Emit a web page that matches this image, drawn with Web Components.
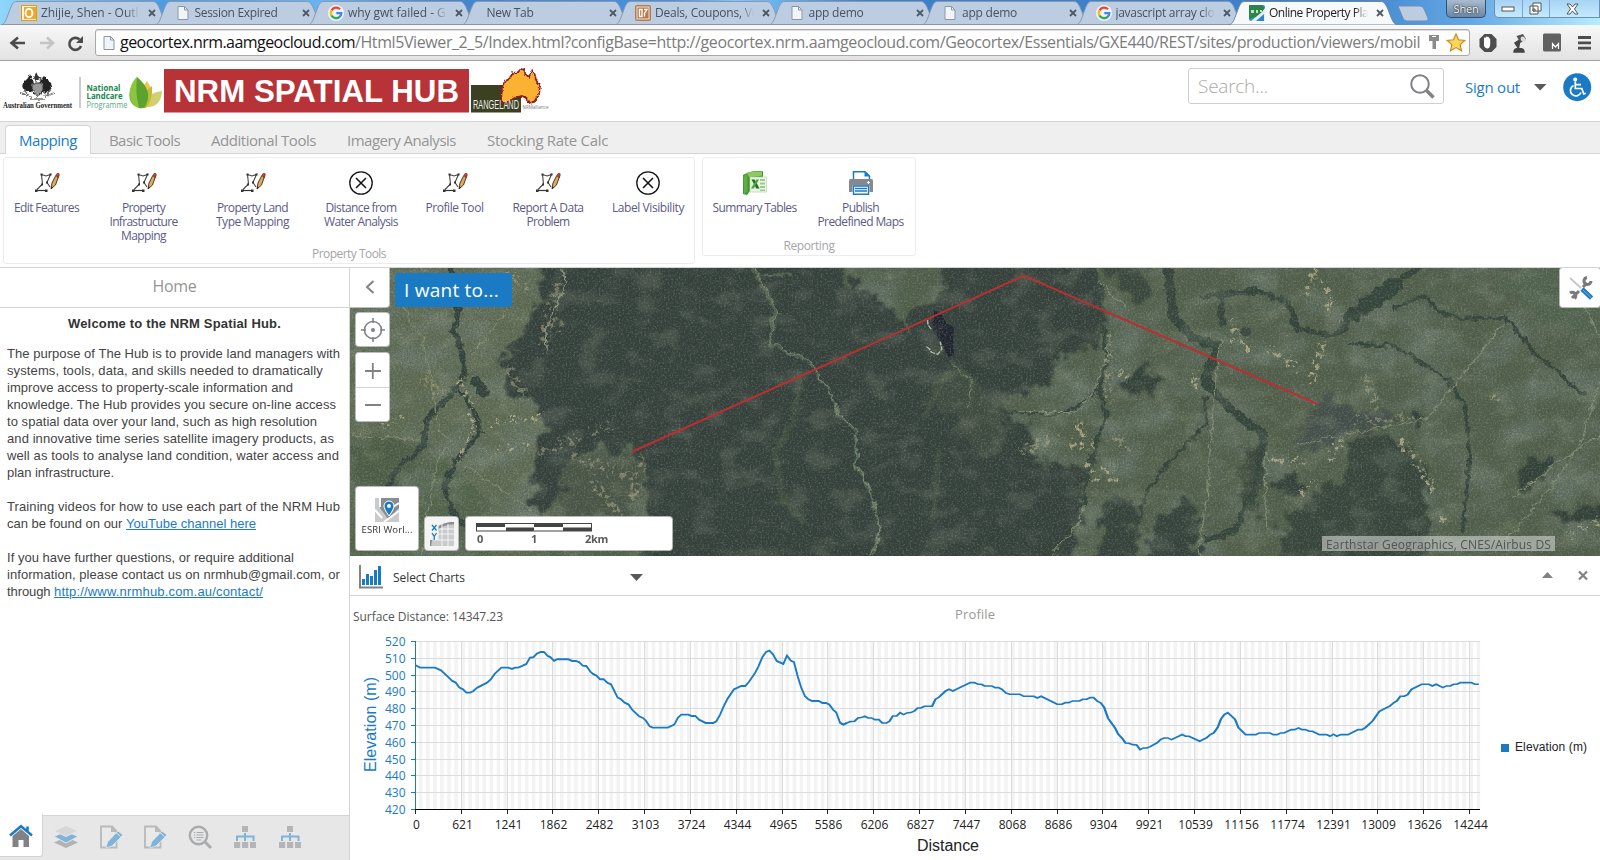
<!DOCTYPE html>
<html lang="en">
<head>
<meta charset="utf-8">
<title>Online Property Planning</title>
<style>
html,body{margin:0;height:100%;background:#fff}
body{font-family:"Open Sans","Noto Sans",sans-serif;font-size:12px;color:#444;overflow:hidden}
</style>
</head>
<body>
<spatial-app></spatial-app>
<script>
const define = (name, markup, hook) => customElements.define(name, class extends HTMLElement {
  connectedCallback() {
    if (this.shadowRoot) return;
    const t = document.createElement('template');
    t.innerHTML = typeof markup === 'function' ? markup(this) : markup;
    this.attachShadow({mode: 'open'}).append(t.content.cloneNode(true));
    if (hook) hook(this);
  }
});

/* One line of text, tracked so that it takes the width given in "w". */
define('fit-text', `<style>:host{display:inline-block;white-space:pre;flex:none;text-decoration:inherit}</style><slot></slot>`, el => {
  requestAnimationFrame(() => fit(el));
  fit(el);
});
function fit(el) {
  const w = +el.getAttribute('w');
  if (!w) return;
  el.style.letterSpacing = '0';
  const n = el.textContent.length;
  const now = el.getBoundingClientRect().width;
  if (now) el.style.letterSpacing = ((w - now) / n).toFixed(3) + 'px';
}

/* ---------- icons ---------- */
const ICONS = {
  outlook: `<svg width="16" height="16"><rect x=".5" y=".5" width="15" height="15" fill="#fff3cf" stroke="#e79a15"/><rect x="3" y="2" width="12" height="12" fill="#eda72a"/><ellipse cx="8" cy="8" rx="3.4" ry="4.2" fill="none" stroke="#fff" stroke-width="2"/></svg>`,
  page: `<svg width="16" height="16"><path d="M3 1.5h6.500l3.500 3.500v9.500h-10z" fill="#f1f4f8" stroke="#8b97a5"/><path d="M9.500 1.500v3.500h3.500" fill="none" stroke="#8b97a5"/></svg>`,
  google: `<svg width="16" height="16"><circle cx="8" cy="8" r="8" fill="#fff" opacity=".75"/><g fill="none" stroke-width="2.300"><path d="M12 4.200A5.300 5.300 0 0 0 3.500 5.500" stroke="#ea4335"/><path d="M3.500 5.400A5.300 5.300 0 0 0 3.500 10.700" stroke="#fbbc05"/><path d="M3.500 10.500A5.300 5.300 0 0 0 11.500 12" stroke="#34a853"/><path d="M11.300 12.200A5.300 5.300 0 0 0 13.300 8.200H8.300" stroke="#4285f4"/></g></svg>`,
  oz: `<svg width="16" height="16"><rect width="16" height="16" rx="2" fill="#b8794e"/><rect x="2" y="2" width="12" height="12" fill="none" stroke="#f0e5dc"/><path d="M4.500 4.500h2.500v7h-2.500zM9 4.500h3l-2.500 4v3" fill="none" stroke="#fff" stroke-width="1.300"/></svg>`,
  geo: `<svg width="16" height="16"><rect width="16" height="16" rx="2" fill="#3f8fc4"/><path d="M0 0h13l3 4-6 7-10 3z" fill="#2b8449"/><path d="M2 16 13 7l3-4v13z" fill="#e5edf0"/><path d="M7 16 15 9v7z" fill="#2f88c9"/><path d="M2 5h3v3H2zM7 5h2v3H7zM11 5h2v2h-2z" fill="#bfe0c6"/></svg>`,
  edit: `<svg width="24" height="24" fill="none"><path d="M6.500 3.500 11 5 15.500 3.500 13.500 8l-1.500 3.500 3 4.500M6.500 3.500 7.500 13 2 18.500" stroke="#444" stroke-width="1.100"/><path d="M1 19.500h10" stroke="#333" stroke-width="1.200"/><g fill="#333"><path d="M5.500 2.500h2v2h-2zM0 18.500h2.500v2.500H0zM10 18.500h2.500v2.500h-2.500zM11 10.500h2v2h-2zM6 12.500h2v2H6zM14.500 2.500h2v2h-2z"/></g><path d="M16 18 17 12 20.800 4.500 23.500 5.500 20.500 14z" fill="#dfac5d" stroke="#4a3a25"/><path d="M21 4.500l1-2h2l.3 1.500L23.200 7z" fill="#d33a28" stroke="#6a2a20" stroke-width=".6"/><path d="M16 18l.5-2.500 1.500 1z" fill="#222"/></svg>`,
  cross: `<svg width="24" height="24" fill="none" stroke="#111" stroke-width="1.300"><circle cx="12" cy="12" r="11.200"/><path d="M7 7l10 10M17 7 7 17" stroke-width="1.500"/></svg>`,
  excel: `<svg width="24" height="24"><path d="M5 1.500Q12-.5 20 .3V7H7v13L4 24 0 23V4z" fill="#3f9434"/><path d="M4 2Q11 0 19 .8v4L6 6z" fill="#8ccb62"/><path d="M.500 5l4-2.500V21L1 23z" fill="#62ad43"/><rect x="7" y="6" width="16.500" height="15" fill="#eef5ea" stroke="#b4d6a6" stroke-width=".7"/><path d="M19.500 8v12" stroke="#9ccb86" stroke-width="5" stroke-dasharray="2 1.500"/><rect x="7.500" y="7.500" width="9" height="11" fill="#dff0d7"/><path d="M8.500 8.500h3.200l4.800 9h-3.200z" fill="#1f6f24"/><path d="M16 8.500h-2.500L8 17.500h2.700z" fill="#4da03f"/></svg>`,
  print: `<svg width="24" height="24"><path d="M4.500 8V.7H16L20.500 5v3" fill="#fff" stroke="#1a7bc4" stroke-width="1.500"/><path d="M15.500 0v5.500h5.500z" fill="#1a7bc4"/><path d="M1.500 8h21q1.500 0 1.500 1.500V21H0V9.500Q0 8 1.500 8z" fill="#86888c"/><path d="M3.500 14.500h17v9.500h-17z" fill="#fff"/><path d="M4.500 15h15v8.200h-15z" fill="#fff" stroke="#1a7bc4" stroke-width="1.400"/><path d="M6 17.500h12M6 20h12" stroke="#1a7bc4" stroke-width="1.300"/><path d="M18 11.500h3M19.500 10v3" stroke="#fff"/></svg>`,
  home: `<svg width="24" height="24"><path d="M3.500 12 12 5l8 7v11h-5.500v-7h-5v7h-6z" fill="#808285"/><path d="M1 11.500 12 2.300 23 11.500M18.500 2.500v6" fill="none" stroke="#1a7bc4" stroke-width="2.600"/></svg>`,
  layers: `<svg width="24" height="24"><path d="M0 17.500 12 12l12 5.500L12 23z" fill="#b2b3b5"/><path d="M0 11.500 12 6l12 5.500L12 18z" fill="#7fb3d9" stroke="#e7e7e7"/><path d="M0 6 12 .5 24 6 12 11.500z" fill="#d5d7d8" stroke="#e7e7e7"/></svg>`,
  note: `<svg width="24" height="24"><path d="M2 1.500h11l4.500 4.500v16.500H2z" fill="#e9e9e9" stroke="#b8b9ba" stroke-width="1.800"/><path d="M12 1v6h6z" fill="#b8b9ba"/><path d="M7 23l1.500-6L19 6l5 4L13 21z" fill="#7fb3d9" stroke="#e7e7e7" stroke-width=".8"/><path d="M17 7.500l4.500 4" stroke="#e7e7e7"/></svg>`,
  find: `<svg width="24" height="24" fill="none"><circle cx="10.500" cy="10.500" r="8.700" stroke="#a9abad" stroke-width="2.400"/><path d="M17 17l6 6" stroke="#a9abad" stroke-width="3"/><path d="M8.500 7.500h7M8.500 10h7M8.500 12.500h7M8.500 15h5M5.800 7.500h1.500M5.800 10h1.500M5.800 12.500h1.500" stroke="#a9abad" stroke-width="1.200"/></svg>`,
  tree: `<svg width="24" height="24"><path d="M9 1h6v6H9zM1 17h6.200v6H1zM9 17h6.200v6H9zM17 17h6v6h-6z" fill="#b4b5b6"/><path d="M12 8v8M4 16v-4.500h16.500V16" fill="none" stroke="#7fb3d9" stroke-width="2"/></svg>`
};
define('ui-icon', el => `<style>:host{display:block;flex:none}svg{display:block;overflow:visible}</style>${ICONS[el.getAttribute('name')] || ''}`);

/* ---------- browser frame ---------- */
define('browser-tab', el => `
<style>
:host{display:block;flex:none;width:153.500px;height:25px;position:relative;color:#475260}
.bg{position:absolute;left:-5px;top:0;display:block}
.row{position:relative;display:flex;align-items:center;height:25px;padding-left:15px}
ui-icon{margin-right:4px}
.t{flex:none;height:18px;line-height:18px;overflow:hidden;white-space:nowrap;width:${el.hasAttribute('icon') ? 99 : 114}px;margin-left:${el.hasAttribute('icon') ? 0 : 5}px;
 -webkit-mask-image:linear-gradient(90deg,#000 86%,transparent);mask-image:linear-gradient(90deg,#000 86%,transparent)}
.x{margin-left:8px}
</style>
<svg class="bg" width="169" height="25"><path d="M0 25C4 24 5 20 8 12S12 1.500 16 1.500H152C156 1.500 158 7 160 12s4 12 8 13z" fill="${el.hasAttribute('active') ? '#f7f8f9' : '#bccde1'}" stroke="${el.hasAttribute('active') ? '#6d87a5' : '#8399b4'}"/>${el.hasAttribute('active') ? '' : '<path d="M0 24.500h169" stroke="#8b959f"/>'}</svg>
<div class="row">${el.hasAttribute('icon') ? `<ui-icon name="${el.getAttribute('icon')}"></ui-icon>` : ''}<div class="t"><slot></slot></div>
<svg class="x" width="8" height="8"><path d="M1 1l6 6M7 1 1 7" stroke="#4c5967" stroke-width="1.800"/></svg></div>`);

define('browser-frame', `
<style>
:host{display:block;flex:none;height:61px;box-sizing:border-box;border-bottom:1px solid #a0a0a0;background:#ececec}
.strip{height:25px;display:flex;background:linear-gradient(90deg,#8fd6fb 0,#4e9be0 10%,#68b4f2 20%,#4385cd 28%,#4a90d8 42%,#7cc8ff 46%,#3d80c8 54%,#3e82cb 84%,#66a8e4 92%,#b8edff);padding-left:6px;box-sizing:border-box}
.new{align-self:flex-start;margin:5px 18px 0 9px}
.user{width:38px;height:17px;border:1px solid #30527a;border-top:0;border-radius:0 0 5px 5px;background:linear-gradient(#a9bbcf,#6a86a6);color:#fff;text-align:center;line-height:17px;font-size:11px;text-shadow:0 0 2px #222,0 0 1px #222}
.win{margin-left:8px;width:107px;height:18px;box-sizing:border-box;border:1px solid #6991b8;border-top:0;border-radius:0 0 0 5px;display:grid;grid-template-columns:28px 27px 1fr;background:linear-gradient(#a9d2f5,#c2ebff)}
.win div{display:grid;place-items:center;border-right:1px solid #7fa6ca}
.bar{height:35px;display:flex;align-items:center;background:linear-gradient(#f8f8f8,#e2e2e2);padding-left:9px}
.box{width:1375px;height:27px;margin-left:11px;box-sizing:border-box;border:1px solid #a9a9a9;border-radius:3px;background:#fff;display:flex;align-items:center;padding-left:5px;font-size:16px;color:#7c7c7c;box-shadow:inset 0 1px 1px #ddd}
.box>ui-icon{margin-right:3px}
.box fit-text{position:relative;top:-1px}
.box svg{flex:none}
.ext{display:flex;align-items:center;margin-left:8px}
</style>
<div class="strip">
<browser-tab icon="outlook"><fit-text w="118">Zhijie, Shen - Outlook</fit-text></browser-tab>
<browser-tab icon="page"><fit-text w="83">Session Expired</fit-text></browser-tab>
<browser-tab icon="google"><fit-text w="112">why gwt failed - Goo</fit-text></browser-tab>
<browser-tab><fit-text w="47">New Tab</fit-text></browser-tab>
<browser-tab icon="oz"><fit-text w="111">Deals, Coupons, Vou</fit-text></browser-tab>
<browser-tab icon="page"><fit-text w="55">app demo</fit-text></browser-tab>
<browser-tab icon="page"><fit-text w="55">app demo</fit-text></browser-tab>
<browser-tab icon="google"><fit-text w="106">javascript array clon</fit-text></browser-tab>
<browser-tab icon="geo" active style="color:#222"><fit-text w="106">Online Property Plan</fit-text></browser-tab>
<svg class="new" width="32" height="17"><path d="M1 1h22q3 0 4 3l4 9q1 3-2 3H10q-3 0-4-3z" fill="#bccde1" stroke="#6d8fb8"/></svg>
<div class="user"><fit-text w="25">Shen</fit-text></div>
<div class="win"><div><svg width="14" height="6"><rect x="1" y="1" width="12" height="4" fill="#fff" stroke="#555"/></svg></div>
<div><svg width="13" height="13"><path d="M4 1h8v8H4zM1 4h8v8H1z" fill="#fff" stroke="#555"/><path d="M4 7h2v2H4z" fill="#cfe" stroke="#555"/></svg></div>
<div style="border:0;padding-right:3px"><svg width="13" height="12"><path d="M1 1h3l2.500 3L9 1h3L8.500 6 12 11H9L6.500 8 4 11H1l3.500-5z" fill="#fff" stroke="#555"/></svg></div></div>
</div>
<div class="bar">
<svg width="75" height="20" fill="none" stroke-width="2.600"><path d="M16 10H3M9 4.500 2.500 10l6.500 5.500" stroke="#4b4b4b"/><path d="M31 10h12M38 4.500l6 5.500-6 5.500" stroke="#c4c4c4"/><path d="M70.500 6.500A6 6 0 1 0 72 13" stroke="#4b4b4b"/><path d="M74 3v7h-7z" fill="#4b4b4b"/></svg>
<div class="box"><ui-icon name="page"></ui-icon><fit-text w="235" style="color:#111">geocortex.nrm.aamgeocloud.com</fit-text><fit-text w="1065">/Html5Viewer_2_5/Index.html?configBase=http://geocortex.nrm.aamgeocloud.com/Geocortex/Essentials/GXE440/REST/sites/production/viewers/mobil</fit-text>
<svg width="46" height="22" style="margin-left:8px"><path d="M1 3h10v6H8v8H4.500v-8H1z" fill="#8b8b8b"/><path d="M4 4.500h4" stroke="#fff"/><path d="M28 2l2.500 5.800 6.300.6-4.700 4.200 1.400 6.200L28 15.600l-5.500 3.200 1.400-6.200-4.700-4.200 6.300-.6z" fill="#fbd65c" stroke="#c48a22" stroke-width="1.200"/></svg></div>
<div class="ext"><svg width="116" height="22"><path d="M6.500 2h7l5 5v8l-5 5h-7l-5-5V7z" fill="#4d4d4d"/><path d="M6 11V6.500q0-1 .8-1t.8 1V5q.8-1 1.600 0 .8-1 1.600.3l.2 1.200q1.200-.5 1.200.5v5q0 4-2.600 4.500Q8 17 6 14z" fill="#fff"/>
<path d="M36 20q0-3.500 5-3.500T46 20zM41 17l-4-6 6-4" fill="#444" stroke="#444" stroke-width="1.500"/><path d="M38.500 4l6.500-2 3 5-5.500 4z" fill="#555"/><ellipse cx="45.500" cy="7.500" rx="2.200" ry="3" fill="#ddd" transform="rotate(-30 45 8)"/>
<rect x="65" y="1.500" width="18" height="18" rx="1.500" fill="#616161"/><path d="M74.500 17v-5.500l3 3.500 3-3.500V17" fill="none" stroke="#fff" stroke-width="1.200"/><path d="M100 5.500h13M100 10.800h13M100 16.100h13" stroke="#4c4c4c" stroke-width="2.800"/></svg></div>
</div>`);

/* ---------- site header ---------- */
define('site-header', `
<style>
:host{display:flex;flex:none;height:61px;box-sizing:border-box;border-bottom:1px solid #d4d4d4;background:#fff;align-items:flex-start}
.logo{display:block;flex:none;overflow:visible}
.search{margin:7px 0 0 638px;width:256px;height:36px;box-sizing:border-box;border:1px solid #cfcfcf;border-radius:3px;display:flex;align-items:center;padding:0 8px 0 9px;justify-content:space-between;font-size:19px;color:#aaa;font-weight:300}
.out{margin:14px 0 0 21px;display:flex;align-items:center;height:24px;font-size:15px;color:#1a7bc4}
.wc{margin:12px 0 0 16px}
</style>
<svg class="logo" width="550" height="56">
<defs><filter id="rough" x="-10%" y="-10%" width="120%" height="120%"><feTurbulence type="fractalNoise" baseFrequency=".45" numOctaves="2" seed="4"/><feDisplacementMap in="SourceGraphic" scale="4" xChannelSelector="R" yChannelSelector="G"/></filter></defs>
<g filter="url(#rough)" transform="translate(0 -1)"><path d="M25 32q-4-3-2-9l5-5 2-4 2 5 3 5-3 8zM49 32q4-3 2-9l-5-5-2-2-3 4-3 5 3 8z" fill="#222"/><path d="M32 23h11v7q-2 5-5.500 6Q34 35 32 30z" fill="#999" stroke="#333"/><path d="M36 12l2 4 4 2-4 2-2 2-2-4z" fill="#333"/><path d="M21 33q8 4 11 3M54 33q-8 4-11 3M30 39h15M24 29l4 6M51 29l-4 6" stroke="#777" stroke-width="1.500" fill="none"/></g>
<text x="3" y="46.500" font-family="Liberation Serif,serif" font-weight="700" font-size="7.500" fill="#222" textLength="69" lengthAdjust="spacingAndGlyphs">Australian Government</text>
<path d="M80 16v31" stroke="#999"/>
<g font-size="8.500" font-weight="700" fill="#17864c"><text x="86.500" y="29.500" textLength="34" lengthAdjust="spacingAndGlyphs">National</text><text x="86.500" y="38" textLength="36" lengthAdjust="spacingAndGlyphs">Landcare</text><text x="86.500" y="46.500" font-weight="400" fill="#5aa883" textLength="41" lengthAdjust="spacingAndGlyphs">Programme</text></g>
<path d="M138 46q8-14 24-16-1 15-13 16z" fill="#cfd070"/><path d="M141 46q-1-18 6-26 8 10 3 25z" fill="#f3c64a"/><path d="M142 47q0-16 10-22 1 14-6 22z" fill="#b9bf3c"/><path d="M137 16q16 13 9 28-2 4-7 3-12-4-9-18 2-8 7-13z" fill="#5ba22f"/><path d="M137 16q-2 16 2 31-11-4-9-18 2-8 7-13z" fill="#8cc63f"/>
<rect x="164" y="8" width="305" height="43.500" fill="#b83337"/><text x="174" y="41" font-family="Liberation Sans,sans-serif" font-weight="700" font-size="31" fill="#fff" textLength="285" lengthAdjust="spacingAndGlyphs">NRM SPATIAL HUB</text>
<rect x="471" y="24" width="50" height="27.500" fill="#3b4020"/>
<path d="M502 28l2-7 5-3 4-6 5-1 3-3 4 1v4l4 3 3-7 3 5 1 5 4 6-1 8-5 8-5 1-3-5-4-2-6 1-6 4-6 2-3-2z" fill="#f9b233" stroke="#8e1d22" stroke-width="1.700" filter="url(#rough)"/>
<text x="473" y="48.500" font-family="Liberation Sans,sans-serif" font-size="10" fill="#eee" textLength="46" lengthAdjust="spacingAndGlyphs" transform="translate(0 -9.700) scale(1 1.200)">RANGELAND</text><text x="522.500" y="48" font-size="4.500" fill="#777" textLength="26" lengthAdjust="spacingAndGlyphs">NRMalliance</text>
</svg>
<div class="search"><fit-text w="70">Search...</fit-text><svg width="25" height="25" fill="none" stroke="#808285"><circle cx="10" cy="10" r="8.800" stroke-width="2"/><path d="M16.500 16.500l7 7" stroke-width="3.600"/></svg></div>
<div class="out"><fit-text w="55">Sign out</fit-text><svg width="13" height="8" style="margin-left:14px"><path d="M0 1h12.500L6.200 7.500z" fill="#58595b"/></svg></div>
<svg class="wc" width="29" height="29"><circle cx="14.200" cy="14.200" r="14" fill="#1a7bc4"/><circle cx="12.200" cy="6.500" r="2" fill="#fff"/><path d="M12.300 8.500v7h6.500l2 5.500 2-.8M12.500 11.700h5.500" fill="none" stroke="#fff" stroke-width="1.700"/><path d="M10.500 12.500a5.500 5.500 0 1 0 7.500 7" fill="none" stroke="#fff" stroke-width="1.700"/></svg>`);

/* ---------- ribbon ---------- */
define('ribbon-item', el => `
<style>:host{display:flex;flex-direction:column;align-items:center;flex:none;width:${el.getAttribute('w')}px;padding-top:13px;font-size:12px;line-height:14px;color:#5b5b86;text-align:center}
ui-icon{margin-bottom:6px}</style><ui-icon name="${el.getAttribute('icon')}"></ui-icon><slot></slot>`);
define('ribbon-group', `
<style>:host{position:relative;display:flex;flex-direction:column;flex:none;box-sizing:border-box;border:1px solid #ececec;border-radius:3px}
.items{display:flex;flex:1}.cap{text-align:center;color:#a5a5a8;font-size:12px;line-height:18px}</style>
<div class="items"><slot></slot></div><div class="cap"><slot name="caption"></slot></div>`);
define('tool-ribbon', `
<style>
:host{display:block;flex:none;height:146px;box-sizing:border-box;border-bottom:1px solid #d4d4d4}
.tabs{height:31px;background:#efefef;border-bottom:1px solid #d4d4d4;display:flex;font-size:15px;line-height:20px;color:#959595;box-sizing:content-box}
.tabs>*{margin-top:8px}
.on{margin:3px 18px 0 5px;width:86px;height:29px;box-sizing:border-box;background:#fff;border:1px solid #d4d4d4;border-bottom:0;border-radius:4px 4px 0 0;color:#1a7bc4;padding:4px 0 0 13px}
.groups{display:flex;align-items:flex-start;gap:7px;padding:3px 0 0 3px}
</style>
<div class="tabs"><div class="on"><fit-text w="58">Mapping</fit-text></div><fit-text w="71">Basic Tools</fit-text><fit-text w="105" style="margin-left:31px">Additional Tools</fit-text><fit-text w="109" style="margin-left:31px">Imagery Analysis</fit-text><fit-text w="121" style="margin-left:31px">Stocking Rate Calc</fit-text></div>
<div class="groups">
<ribbon-group style="width:692px;height:107px"><ribbon-item w="85" icon="edit"><fit-text w="65">Edit Features</fit-text></ribbon-item>
<ribbon-item w="109" icon="edit"><fit-text w="43">Property</fit-text><fit-text w="68">Infrastructure</fit-text><fit-text w="45">Mapping</fit-text></ribbon-item>
<ribbon-item w="109" icon="edit"><fit-text w="71">Property Land</fit-text><fit-text w="73">Type Mapping</fit-text></ribbon-item>
<ribbon-item w="108" icon="cross"><fit-text w="71">Distance from</fit-text><fit-text w="74">Water Analysis</fit-text></ribbon-item>
<ribbon-item w="79" icon="edit"><fit-text w="58">Profile Tool</fit-text></ribbon-item>
<ribbon-item w="108" icon="edit"><fit-text w="71">Report A Data</fit-text><fit-text w="43">Problem</fit-text></ribbon-item>
<ribbon-item w="92" icon="cross"><fit-text w="72">Label Visibility</fit-text></ribbon-item><fit-text slot="caption" w="74">Property Tools</fit-text></ribbon-group>
<ribbon-group style="width:214px;height:99px"><ribbon-item w="103" icon="excel"><fit-text w="84">Summary Tables</fit-text></ribbon-item>
<ribbon-item w="109" icon="print"><fit-text w="37">Publish</fit-text><fit-text w="86">Predefined Maps</fit-text></ribbon-item><fit-text slot="caption" w="51">Reporting</fit-text></ribbon-group>
</div>`);

/* ---------- left panel ---------- */
define('home-panel', `
<style>
:host{display:flex;flex-direction:column;width:350px;box-sizing:border-box;border-right:1px solid #d4d4d4;flex:none}
.h{height:39px;border-bottom:1px solid #d4d4d4;text-align:center;font-size:16px;line-height:37px;color:#959595}
.b{flex:1;padding:7px;font:13px/17px "Liberation Sans",Arial,sans-serif;color:#444}
.b>div{height:17px;white-space:nowrap}.b .w{text-align:center;font-weight:700;margin-bottom:13px;color:#333}
.b .g{margin-bottom:17px}
a fit-text{color:#1a7bc4;text-decoration:underline}
.f{height:45px;padding-bottom:3px;display:flex;background:#e7e7e7;border-top:1px solid #d4d4d4;box-sizing:border-box;align-items:center;gap:20.800px}
.hm{width:43px;height:43px;background:#fff;border-right:1px solid #d4d4d4;border-bottom:1px solid #d4d4d4;border-radius:0 0 3px 0;display:grid;place-items:center;padding:2px 1px 0 0;box-sizing:border-box;margin:-2px -10px -3px 0;align-self:flex-start}
</style>
<div class="h"><fit-text w="44">Home</fit-text></div>
<div class="b"><div class="w"><fit-text w="213">Welcome to the NRM Spatial Hub.</fit-text></div>
<div><fit-text w="333">The purpose of The Hub is to provide land managers with</fit-text></div>
<div><fit-text w="316">systems, tools, data, and skills needed to dramatically</fit-text></div>
<div><fit-text w="286">improve access to property-scale information and</fit-text></div>
<div><fit-text w="329">knowledge. The Hub provides you secure on-line access</fit-text></div>
<div><fit-text w="310">to spatial data over your land, such as high resolution</fit-text></div>
<div><fit-text w="327">and innovative time series satellite imagery products, as</fit-text></div>
<div><fit-text w="332">well as tools to analyse land condition, water access and</fit-text></div>
<div class="g"><fit-text w="107">plan infrastructure.</fit-text></div>
<div><fit-text w="333">Training videos for how to use each part of the NRM Hub</fit-text></div>
<div class="g"><fit-text w="119">can be found on our </fit-text><a><fit-text w="130">YouTube channel here</fit-text></a></div>
<div><fit-text w="287">If you have further questions, or require additional</fit-text></div>
<div><fit-text w="333">information, please contact us on nrmhub@gmail.com, or</fit-text></div>
<div><fit-text w="47">through </fit-text><a><fit-text w="209">http://www.nrmhub.com.au/contact/</fit-text></a></div></div>
<div class="f"><div class="hm"><ui-icon name="home"></ui-icon></div><ui-icon name="layers"></ui-icon><ui-icon name="note"></ui-icon><ui-icon name="note"></ui-icon><ui-icon name="find"></ui-icon><ui-icon name="tree"></ui-icon><ui-icon name="tree"></ui-icon></div>`);

/* ---------- satellite map ---------- */
const L = 'translate(0 -3) scale(.40816 .33333)', R = 'translate(630 -3) scale(.39541 .33333)';
define('map-view', `
<style>
:host{display:block;position:relative;height:288px;flex:none;overflow:hidden;background:#4b5844}
svg{display:block}
.c{position:absolute;background:#fff;border-radius:3px;box-shadow:0 0 0 1px rgba(215,215,215,.75);display:grid;place-items:center}
.scale{padding:6px 0 0 10px;box-sizing:border-box;display:block;place-items:normal;font-weight:700;color:#58595b;font-size:11px}
.n{display:flex;line-height:14px;padding-left:1px}
</style>
<svg width="1250" height="288">
<defs>
<filter id="edge" x="-5%" y="-5%" width="110%" height="110%"><feTurbulence type="fractalNoise" baseFrequency=".07" numOctaves="5" seed="7"/><feDisplacementMap in="SourceGraphic" scale="30" xChannelSelector="R" yChannelSelector="G"/><feGaussianBlur stdDeviation=".8"/></filter>
<filter id="wob" x="-5%" y="-5%" width="110%" height="110%"><feTurbulence type="fractalNoise" baseFrequency=".12" numOctaves="3" seed="12"/><feDisplacementMap in="SourceGraphic" scale="9" xChannelSelector="R" yChannelSelector="G"/><feGaussianBlur stdDeviation=".5"/></filter>
<filter id="speck" x="-5%" y="-5%" width="110%" height="110%"><feTurbulence type="fractalNoise" baseFrequency=".2" numOctaves="4" seed="31" result="n"/><feDisplacementMap in="SourceGraphic" in2="n" scale="16" xChannelSelector="R" yChannelSelector="G" result="d"/><feColorMatrix in="n" values="0 0 0 0 1 0 0 0 0 1 0 0 0 0 1 8 0 0 0 -4.100" result="m"/><feComposite in="d" in2="m" operator="in"/><feGaussianBlur stdDeviation=".4"/></filter>
<filter id="grain" x="0" y="0" width="100%" height="100%"><feTurbulence type="fractalNoise" baseFrequency=".65" numOctaves="2" seed="3"/><feColorMatrix values="0 0 0 0 .05 0 0 0 0 .08 0 0 0 0 .07 2.200 0 0 0 -.95"/></filter>
<filter id="lite" x="0" y="0" width="100%" height="100%"><feTurbulence type="fractalNoise" baseFrequency=".55" numOctaves="3" seed="19"/><feColorMatrix values="0 0 0 0 .72 0 0 0 0 .75 0 0 0 0 .62 0 2 0 0 -.95"/></filter>
<filter id="mottle" x="0" y="0" width="100%" height="100%"><feTurbulence type="fractalNoise" baseFrequency=".02 .03" numOctaves="5" seed="9"/><feColorMatrix values="0 0 0 0 .18 0 0 0 0 .23 0 0 0 0 .20 3 0 0 0 -1.300"/></filter>
<filter id="tone" x="0" y="0" width="100%" height="100%"><feTurbulence type="fractalNoise" baseFrequency=".035 .05" numOctaves="5" seed="44"/><feColorMatrix values="0 0 0 0 .45 0 0 0 0 .48 0 0 0 0 .36 0 4 0 0 -2"/></filter>
</defs>
<rect width="1250" height="288" fill="#53604b"/>
<rect width="200" height="288" fill="#606c54"/>
<path d="M0 165l80 10 60 60v53H0z" fill="#54654c"/>
<rect width="1250" height="288" filter="url(#mottle)" opacity=".5"/>
<g filter="url(#edge)">
<path d="M192 -20 190 30 168 72 150 92 158 127 188 138 198 152 186 193 180 239 206 236 216 194 250 180 286 190 298 206 290 300H722L730 245 737 200 682 192 678 158 640 132 702 118 705 88 745 78 755 48 742 -20H600L592 28 560 46 540 38 500 12 482 -20z" fill="#35413b"/>
<path d="M206 230 216 198 250 184 286 194 294 206 282 250 214 250z" fill="#4b5646"/>
<path d="M585 110l20-8 30 18 25 20-5 40-25 8-30-40-20-15z" fill="#3f4c41"/>
<path d="M756 238 785 230 788 300H744zM800 262 832 232 850 240 845 300H800z" fill="#35423a"/>
<path d="M996 176 1030 164 1062 180 1078 220 1074 300H936L930 260 966 224 998 214z" fill="#39443b"/>
<path d="M745 -10 790 -10 802 30 784 36 760 8z" fill="#3a473c"/>
<path d="M768 118 794 98 812 110 808 130 776 124zM1166 214 1180 192 1204 186 1194 208 1172 222zM925 215 945 208 952 222 935 232zM1205 246 1250 236 1250 250 1212 256zM1060 150l18-7-12 18z" fill="#334039"/>
<path d="M944 180 962 146 975 128 1010 142 1050 150 1020 164 975 174z" fill="#3e4848" opacity=".7"/>
<path d="M894 178 912 176 916 210 902 246 892 235z" fill="#3c4a3e"/>
<path d="M1160 -5 1260 -5V70L1200 60 1150 20z" fill="#53654f"/>
<path d="M0 168 80 174 66 200 40 230 0 215z" fill="#4d5943" opacity=".7"/>
</g>
<path d="M584 42l7 4 6 10 7 3-1 14 1 14-6 2-6-14-9-13z" fill="#1e222d"/>
<g filter="url(#wob)" fill="none" stroke-linecap="round" stroke-linejoin="round">
<g transform="${L}">
<g stroke="#33423a"><path d="M245 10 265 130 255 200 275 260 280 330 255 380 195 450 180 540 115 610 95 670" stroke-width="14"/><path d="M265 370 300 430 320 500 260 590 230 660 250 740 290 790" stroke-width="12"/><path d="M310 350 325 380" stroke-width="30"/></g>
<g stroke="#858c6f" stroke-width="3"><path d="M130 125 180 230 200 350 215 490 245 530M390 130 300 270M245 545 210 590 175 870M280 600 450 740M0 510 170 525"/></g>
<g stroke="#526350" stroke-width="7"><path d="M985 10 1040 130 1030 240 1120 285 1170 370 1200 450 1240 500 1240 600 1275 680 1300 790 1280 870M1340 10 1345 120 1370 200M990 30 1080 30"/></g>
<path d="M990 10 1045 130 1033 235 1122 285 1172 370 1195 440 1240 495 1240 600 1275 680 1300 790 1280 870" stroke="#7c8b75" stroke-width="2.500"/>
<path d="M1100 330 1085 480 1040 560 1060 700 1110 770M1480 290 1525 350 1520 430M1470 310 1410 450M1440 560 1430 760" stroke="#4a5946" stroke-width="16" opacity=".5"/>
<path d="M520 10 530 50 500 130 480 200 480 255" stroke="#8d947a" stroke-width="4"/>
<path d="M1480 300 1525 350 1515 430" stroke="#6f7e6a" stroke-width="3"/>
</g>
<g transform="${R}">
<g stroke="#35443a" stroke-width="16"><path d="M475 10 490 160 540 220 600 240 570 350 640 440 720 510" stroke-width="24"/><path d="M720 510 690 690 640 800 570 825M570 95 700 78 780 110 800 190 900 212 960 130 1060 50 1110 5M610 80 610 180"/><path d="M940 235 1040 240 1180 340 1225 420 1240 560 1220 800" stroke-width="10"/><path d="M570 400 570 480 480 590 420 680 395 800" stroke-width="10"/><path d="M290 10 310 180 320 290 300 370 320 450 270 620 265 720" stroke-width="11"/><path d="M300 370 240 430 180 450 60 440 0 405" stroke-width="7"/><path d="M1050 130 1120 90 1160 140 1210 160 1330 160 1400 260 1450 310 1530 390" stroke-width="9"/><path d="M940 150 1050 60" stroke-width="42"/></g>
<g stroke="#7f8a70" stroke-width="3.500"><path d="M610 220 590 400 575 700 550 870M800 540 920 510 1130 460 1330 170M1568 350 1520 530 1430 690 1330 820M1568 510 1440 610 1350 700M1520 100 1568 220M300 50 370 130M720 560 725 800M265 720 240 790 180 870M330 220 295 370 240 440 100 440"/></g>
</g></g>
<g filter="url(#speck)" fill="none" stroke="#b9b28e" stroke-linecap="round" opacity=".85">
<g transform="${L}"><path d="M275 350 300 420 310 490 270 580M315 480 400 465 470 455M80 480 130 460M350 560 440 540" stroke-width="14"/><path d="M490 150 520 190M600 650 660 740M620 600 700 640M560 580 600 600M385 15 430 60M400 310 430 390M480 560 560 520M600 500 650 480M720 580 700 690M515 60 480 230" stroke-width="28" opacity=".6"/><path d="M190 340l40 40" stroke="#b39f5a" stroke-width="26" opacity=".6"/></g>
<g transform="${R}"><path d="M650 165 650 220 690 250M850 20 830 80M880 50 890 130M740 250 810 310M870 240 840 360M1070 530 1110 590 1150 670M240 540 290 540M255 480 265 510M750 590 820 590M890 580 920 530M320 610 350 650M1170 760 1180 770M1500 800 1568 770M360 330 380 340M550 330 550 360M270 600 300 640M1290 400 1310 400M820 680 850 660" stroke-width="20"/><path d="M200 520 110 560 150 520M350 520 380 550M960 470 1100 460M980 340 1010 420M330 220 330 400" stroke-width="20" opacity=".6"/></g></g>
<g transform="${R}"><ellipse cx="672" cy="200" rx="14" ry="13" fill="#3c463f"/></g>
<rect width="1250" height="288" filter="url(#tone)" opacity=".16"/>
<rect width="1250" height="288" filter="url(#grain)" opacity=".55"/>
<rect width="1250" height="288" filter="url(#lite)" opacity=".27"/>
<g transform="${L}" fill="none" stroke="#b4bab3" stroke-width="3.500"><path d="M1415 165 1416 180 1424 192M1412 245 1418 250 1425 262 1440 268 1450 252 1446 230" stroke-dasharray="14 3"/></g>
<path d="M282.500 183.500 674 7.700 967.500 136" fill="none" stroke="#b93032" stroke-width="2"/>
</svg>
<div class="c" style="left:0;top:0;width:39px;height:39px;border-radius:0 0 3px 0"><svg width="10" height="14" style="margin-top:-1px"><path d="M8.500 1 2 7l6.500 6" fill="none" stroke="#808285" stroke-width="2"/></svg></div>
<div class="c" style="left:45px;top:5px;width:117px;height:34px;background:#1a7bc4;box-shadow:none;color:#fff;font-size:19px"><fit-text w="95" style="margin-left:-4px">I want to...</fit-text></div>
<div class="c" style="left:6px;top:45px;width:33px;height:33px"><svg width="24" height="24" fill="none" stroke="#808285" stroke-width="1.600"><circle cx="12" cy="12" r="8.500"/><path d="M12 0v5M12 19v5M0 12h5M19 12h5"/><circle cx="12" cy="12" r="2" fill="#808285" stroke="none"/></svg></div>
<div class="c" style="left:6px;top:85px;width:33px;height:68px"><svg width="33" height="68" stroke="#808285" stroke-width="1.800"><path d="M9 18h16M16.800 10v16M9 52h16"/><path d="M0 34.500h33" stroke="#d4d4d4" stroke-width="1"/></svg></div>
<div class="c" style="left:6px;top:219px;width:62px;height:63px;align-content:center;gap:1px;color:#333;font-size:9.500px;box-sizing:border-box;padding-bottom:7px"><svg width="24" height="24" style="margin-top:4px"><rect width="24" height="24" fill="#c9cacb"/><path d="M5 0h19v10L13 21 5 10z" fill="#8b8c8e"/><path d="M0 12l7 8M24 13 9 24M5 0v9M24 5l-6 4" stroke="#fff" stroke-width="2"/><path d="M14 18Q9 11 9 8a5 5 0 0 1 10 0q0 3-5 10z" fill="#1a7bc4" stroke="#fff"/><circle cx="14" cy="8" r="2" fill="#fff"/></svg><fit-text w="51">ESRI Worl...</fit-text></div>
<div class="c" style="left:75px;top:249px;width:33px;height:33px;background:#f4f4f4"><svg width="24" height="24"><path d="M0 24Q1 2 24 1v23z" fill="#c9cacb"/><path d="M0 24Q1 2 24 1" fill="none" stroke="#8b8c8e" stroke-width="2.500"/><path d="M12 2v22M18 2v22M6 12h18M4 18h20M9 7h15" stroke="#f4f4f4"/><path d="M0 0h8.500v18H0z" fill="#f4f4f4"/><path d="M2 3l4.500 5.500M6.500 3 2 8.500M2 11l2.200 3.500V18M6.500 11l-2.300 3.500" fill="none" stroke="#1a7bc4" stroke-width="1.300"/></svg></div>
<div class="c scale" style="left:116px;top:249px;width:206px;height:33px"><svg width="117" height="9"><rect x=".5" y=".5" width="115" height="7.500" fill="#fff" stroke="#444"/><path d="M1 1h28v3H1zM58 1h29v3H58zM30 4.500h28V8H30zM87 4.500h28V8H87z" fill="#444"/></svg><div class="n"><span style="width:54px">0</span><span style="width:54px">1</span><fit-text w="23">2km</fit-text></div></div>
<div class="c" style="left:1210px;top:0;width:40px;height:39px"><svg width="24" height="24" fill="none" style="margin-left:2px"><path d="M1 2l11 10" stroke="#c3c5c7" stroke-width="1.800"/><path d="M3 22l7-7M14 11l4-4" stroke="#77797c" stroke-width="3"/><path d="M22 5a3.500 3.500 0 1 1-4-3.500M1 17a3.500 3.500 0 1 1 4.500 5.500" stroke="#77797c" stroke-width="3"/><path d="M13 13l9.500 9" stroke="#1a7bc4" stroke-width="4.500"/><path d="M14 14l8 7.500" stroke="#8fc2e6" stroke-width=".8"/></svg></div>
<div class="c" style="left:972px;top:268px;width:233px;height:15px;border-radius:0;box-shadow:none;background:rgba(205,208,205,.62);color:#4f5653"><fit-text w="225">Earthstar Geographics, CNES/Airbus DS</fit-text></div>`);

/* ---------- elevation chart ---------- */
const X0 = 415.5, Y0 = 641.5, XW = 1480, TICK = 45.83, STEP = TICK / 13, ROW = 16.8;
function chartSvg() {
  let s = '';
  for (let x = X0 + STEP; x < XW - 2; x += STEP * 2) s += `<rect x="${x.toFixed(2)}" y="${Y0}" width="${STEP.toFixed(2)}" height="168" fill="#f3f3f3"/>`;
  for (let i = 0; i <= 10; i++) {
    const y = Math.floor(Y0 + i * ROW + .01) + .5;
    if (i < 10) s += `<path d="M${X0} ${y}H${XW}" stroke="#dcdcdc"/>`;
    s += `<path d="M411 ${y}h5" stroke="#1a7bc4"/><text x="385" y="${y + 4}" fill="#1a7bc4" textLength="20.500">${520 - i * 10}</text>`;
  }
  const names = [0, 621, 1241, 1862, 2482, 3103, 3724, 4344, 4965, 5586, 6206, 6827, 7447, 8068, 8686, 9304, 9921, 10539, 11156, 11774, 12391, 13009, 13626, 14244];
  names.forEach((n, i) => {
    const x = Math.floor(X0 + i * TICK) + .5, w = String(n).length * 6.9;
    if (i) s += `<path d="M${x} ${Y0}v168" stroke="#dcdcdc"/>`;
    s += `<path d="M${x} 810v4" stroke="#222"/><text x="${x + 1 - w / 2}" y="829" fill="#222" textLength="${w}">${n}</text>`;
  });
  s += `<path d="M${X0} 641v169" stroke="#1a7bc4"/><path d="M415 809.500H${XW}" stroke="#000"/>`;
  return s;
}
define('chart-panel', () => `
<style>
:host{display:flex;flex-direction:column;flex:1;background:#fff}
.h{height:39px;border-bottom:1px solid #d4d4d4;display:flex;align-items:center;padding-left:9px;color:#333}
.h fit-text{margin:3px 165px 0 10px}
.plot{display:block}
text{font-size:12px}
</style>
<div class="h"><svg width="24" height="24" style="margin-top:2px"><path d="M1 0v22.500h23" fill="none" stroke="#808285" stroke-width="2"/><path d="M3 14h3v6H3zM7 9h3v11H7zM11 11h3v9h-3zM15 5h3v15h-3zM19 1h3v19h-3z" fill="#1a7bc4"/></svg><fit-text w="72">Select Charts</fit-text><svg width="13" height="7" style="margin-top:3px"><path d="M0 0h13L6.500 7z" fill="#58595b"/></svg>
<svg width="46" height="12" style="margin-left:899px"><path d="M0 8h11L5.500 2z" fill="#808285"/><path d="M37 1.500l8 8M45 1.500l-8 8" stroke="#808285" stroke-width="2.200"/></svg></div>
<svg class="plot" width="1250" height="264" viewBox="350 596 1250 264">
<text x="353" y="621" fill="#555" textLength="150">Surface Distance: 14347.23</text><text x="955" y="619" fill="#999" textLength="40" style="font-size:13px">Profile</text>
${chartSvg()}
<g fill="none" stroke="#1a7bc4"><polyline transform="translate(350 599.600) scale(.33333)" stroke-width="5.700" points="197,197 210,204 255,204 273,212 290,228 307,244 317,249 328,264 339,269 349,279 361,279 369,275 382,264 410,250 422,240 434,223 454,204 474,204 486,208 495,204 505,204 517,199 529,193 540,174 550,173 561,162 572,157 582,157 593,169 602,173 612,184 622,179 655,179 667,184 678,184 688,188 698,198 709,199 721,216 729,223 739,228 750,239 761,239 773,250 783,254 803,294 813,299 824,309 836,315 847,331 867,350 879,355 888,364 899,380 908,384 953,384 973,375 984,354 994,345 1015,345 1024,349 1036,349 1047,360 1067,370 1090,370 1099,365 1110,346 1122,318 1133,297 1152,269 1174,259 1186,259 1196,248 1215,220 1225,201 1237,173 1248,157 1258,153 1269,164 1280,184 1300,193 1311,168 1322,183 1332,188 1343,230 1354,265 1365,290 1375,299 1386,304 1406,304 1417,310 1428,310 1438,315 1449,330 1459,339 1470,369 1480,375 1491,370"/>
<polyline transform="translate(840 599.600) scale(.4847 .33333)" stroke-width="4.800" points="0,370 7,375 21,366 30,365 37,355 44,354 51,350 58,355 65,355 72,360 80,360 87,370 96,370 102,365 109,349 117,349 124,339 131,345 138,340 146,339 153,335 160,325 167,325 174,320 190,320 197,299 204,293 218,274 225,269 233,274 247,264 269,249 277,249 285,254 292,254 298,259 313,259 320,264 327,264 334,269 342,280 350,284 371,284 379,290 400,290 407,295 415,290 448,314 458,314 465,309 472,309 480,304 494,304 501,299 509,299 516,294 523,294 531,305 538,310 545,323 553,356 567,384 574,404 582,416 589,430 596,431 604,435 612,436 619,450 626,445 633,445 640,441 654,430 662,419 669,415 676,415 684,420 706,405 713,410 720,410 742,425 756,415 764,405 771,400 779,384 786,358 793,345 800,339 815,359 822,384 837,405 858,405 865,400 887,400 894,405 902,405 909,400 916,400 931,390 938,390 946,385 953,390 960,390 968,395 975,395 989,405 1004,405 1011,410 1018,404 1025,410 1033,405 1048,405 1069,390 1077,390 1084,384 1099,364 1113,335 1134,320 1143,309 1149,304 1156,290 1164,290 1171,285 1179,269 1200,254 1215,254 1222,259 1230,254 1244,264 1251,259 1259,259 1266,254 1273,254 1280,249 1302,249 1310,254 1318,254"/></g>
<g font-family="Liberation Sans,Arial,sans-serif"><text transform="translate(376 772) rotate(-90)" fill="#1a7bc4" style="font-size:16px" textLength="95">Elevation (m)</text>
<text x="917" y="851" fill="#222" style="font-size:16px" textLength="62">Distance</text><text x="1515" y="751" fill="#222" textLength="72">Elevation (m)</text></g>
<rect x="1501" y="744" width="8" height="8" fill="#1a7bc4"/>
</svg>`);

define('spatial-app', `
<style>:host{display:flex;flex-direction:column;width:1600px;height:860px;overflow:hidden;background:#fff}
.main{flex:1;display:flex;min-height:0}.right{flex:1;display:flex;flex-direction:column;min-width:0}</style>
<browser-frame></browser-frame><site-header></site-header><tool-ribbon></tool-ribbon>
<div class="main"><home-panel></home-panel><div class="right"><map-view></map-view><chart-panel></chart-panel></div></div>`);
</script>
</body>
</html>
